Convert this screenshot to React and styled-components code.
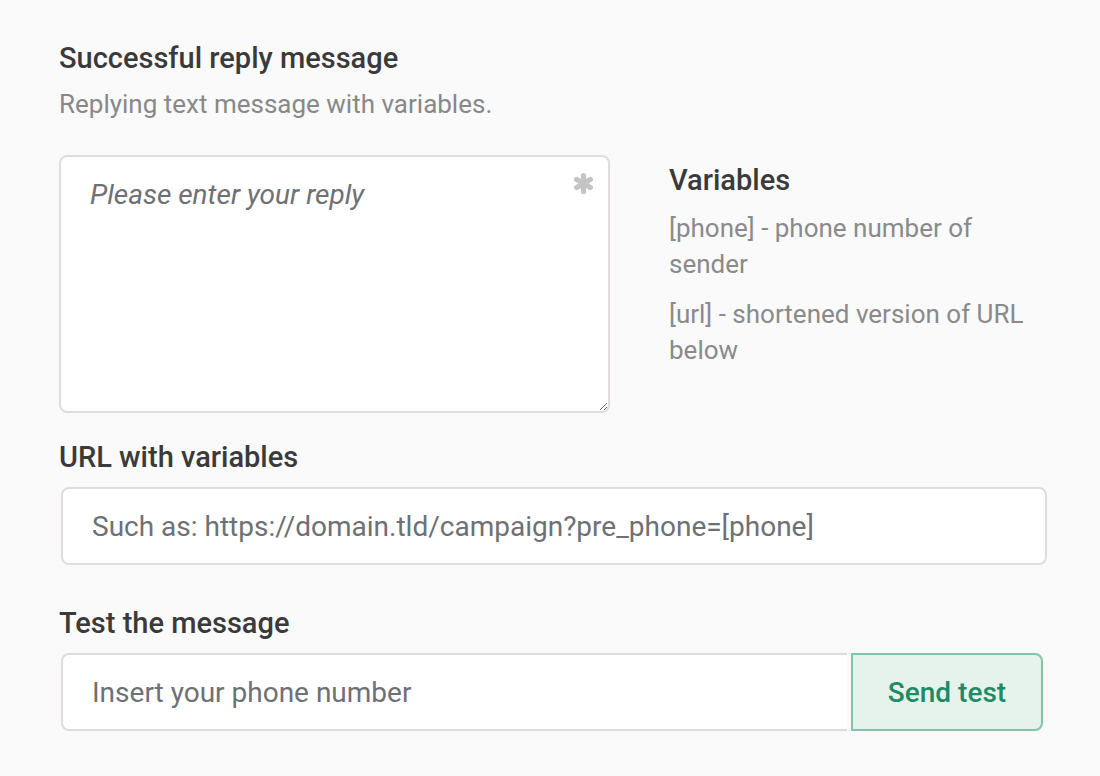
import React from "react";
import styled, { createGlobalStyle } from "styled-components";

const GlobalStyle = createGlobalStyle`
  body {
    margin: 0;
    background: #fafafa;
    font-family: Roboto, "Liberation Sans", sans-serif;
  }
`;

const Page = styled.div`
  padding: 40px 53px 40px 59px;
  color: #3c3c3c;
`;

const Title = styled.h2`
  margin: 0;
  font-size: 29px;
  font-weight: 500;
  line-height: 36px;
  color: #3a3a3a;
`;

const Subtitle = styled.p`
  margin: 12px 0 0;
  font-size: 26px;
  line-height: 32px;
  color: #888;
`;

const Row = styled.div`
  display: flex;
  gap: 59px;
  margin-top: 35px;
`;

const TextareaWrap = styled.div`
  position: relative;
  width: 551px;
  height: 258px;
  flex-shrink: 0;
`;

const Textarea = styled.textarea`
  display: block;
  box-sizing: border-box;
  width: 100%;
  height: 100%;
  padding: 21px 29px;
  border: 2px solid #e0dcdc;
  border-radius: 8px;
  background: #fff;
  font-family: inherit;
  font-size: 28px;
  line-height: 34px;
  color: #333;
  resize: vertical;
  outline: none;

  &::placeholder {
    font-style: italic;
    color: #6d7075;
  }
`;

// required marker sits over the textarea's top-right corner
const Required = styled.svg`
  position: absolute;
  top: 18px;
  right: 16px;
  width: 21px;
  height: 21px;
`;

const Variables = styled.div`
  flex: 1;
  padding-top: 7px;
`;

const VarTitle = styled.h3`
  margin: 0 0 12px;
  font-size: 29px;
  font-weight: 500;
  line-height: 36px;
  color: #3a3a3a;
`;

const VarText = styled.p`
  margin: 0 0 14px;
  font-size: 26px;
  line-height: 36px;
  color: #8a8a8a;
`;

const Label = styled.h3`
  margin: ${(p) => p.$top}px 0 12px;
  font-size: 29px;
  font-weight: 500;
  line-height: 36px;
  color: #3a3a3a;
`;

const Input = styled.input`
  display: block;
  box-sizing: border-box;
  width: 986px;
  height: 78px;
  margin-left: 2px;
  padding: 0 29px;
  border: 2px solid #e0dcdc;
  border-radius: 8px;
  background: #fff;
  font-family: inherit;
  font-size: 28px;
  color: #333;
  outline: none;

  &::placeholder {
    color: #6d7075;
  }
`;

const Group = styled.div`
  display: flex;
  gap: 4px;
  margin-left: 2px;
  width: 982px;
`;

const GroupInput = styled(Input)`
  flex: 1;
  width: auto;
  margin-left: 0;
  border-right: none;
  border-radius: 8px 0 0 8px;
`;

const Button = styled.button`
  width: 192px;
  height: 78px;
  border: 2px solid #80c4aa;
  border-radius: 0 8px 8px 0;
  background: #e6f3ed;
  font-family: inherit;
  font-size: 28px;
  font-weight: 500;
  color: #1f8a63;
  cursor: pointer;
`;

const AsteriskIcon = () => (
  <Required viewBox="0 0 20 20" aria-hidden="true">
    <g stroke="#c4c4c4" strokeWidth="5" strokeLinecap="round">
      <line x1="10" y1="2.5" x2="10" y2="17.5" />
      <line x1="3.5" y1="6.25" x2="16.5" y2="13.75" />
      <line x1="3.5" y1="13.75" x2="16.5" y2="6.25" />
    </g>
  </Required>
);

export default function App() {
  return (
    <>
      <GlobalStyle />
      <Page>
        <Title>Successful reply message</Title>
        <Subtitle>Replying text message with variables.</Subtitle>
        <Row>
          <TextareaWrap>
            <Textarea placeholder="Please enter your reply" />
            <AsteriskIcon />
          </TextareaWrap>
          <Variables>
            <VarTitle>Variables</VarTitle>
            <VarText>[phone] - phone number of sender</VarText>
            <VarText>[url] - shortened version of URL below</VarText>
          </Variables>
        </Row>
        <Label $top={26}>URL with variables</Label>
        <Input placeholder="Such as: https://domain.tld/campaign?pre_phone=[phone]" />
        <Label $top={40}>Test the message</Label>
        <Group>
          <GroupInput placeholder="Insert your phone number" />
          <Button>Send test</Button>
        </Group>
      </Page>
    </>
  );
}
